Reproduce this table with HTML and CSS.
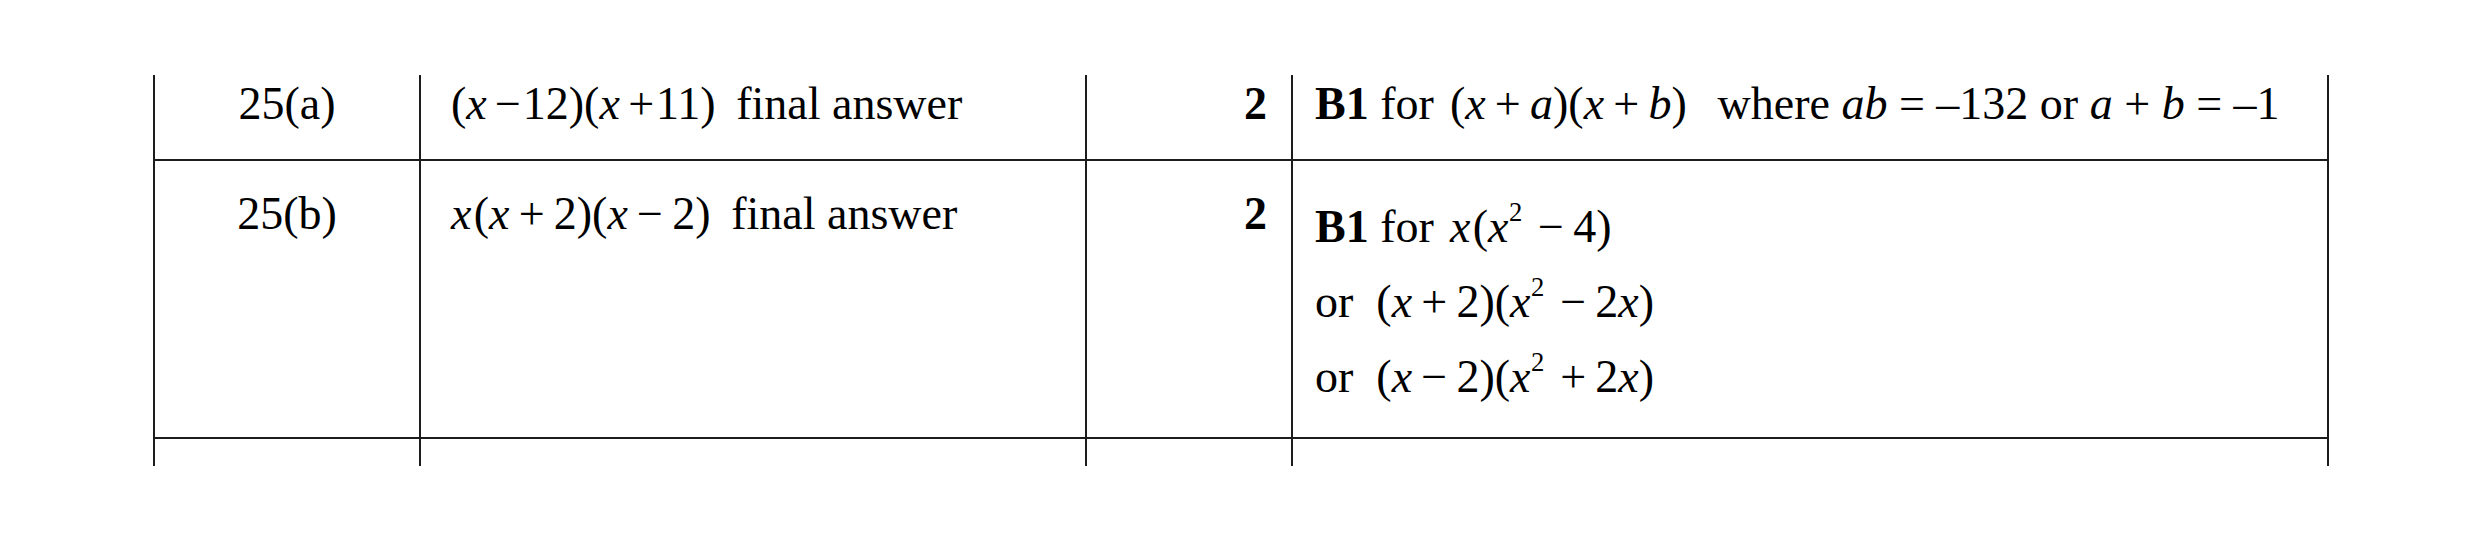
FILE: index.html
```html
<!DOCTYPE html>
<html lang="en">
<head>
<meta charset="utf-8">
<title>Mark scheme</title>
<link rel="stylesheet" href="styles.css">
</head>
<body>
<div class="page">
  <table class="scheme">
    <colgroup>
      <col class="c-q">
      <col class="c-ans">
      <col class="c-mark">
      <col class="c-notes">
    </colgroup>
    <tbody>
      <tr class="row-a">
        <td class="q">25(a)</td>
        <td class="ans"><span class="m">(<i>x</i><span class="op tight">−</span>12)(<i>x</i><span class="op tight">+</span>11)</span><span class="gap"></span>final answer</td>
        <td class="mark">2</td>
        <td class="notes"><b>B1</b> for <span class="gap-s"></span><span class="m">(<i>x</i><span class="op">+</span><i>a</i>)(<i>x</i><span class="op">+</span><i>b</i>)</span><span class="gap wide"></span>where <i>ab</i> = –132 or <i>a</i> + <i>b</i> = –1</td>
      </tr>
      <tr class="row-b">
        <td class="q">25(b)</td>
        <td class="ans"><span class="m"><i class="xc">x</i>(<i>x</i><span class="op">+</span>2)(<i>x</i><span class="op">−</span>2)</span><span class="gap"></span>final answer</td>
        <td class="mark">2</td>
        <td class="notes">
          <div class="line"><b>B1</b> for <span class="gap-s"></span><span class="m"><i class="xc">x</i>(<i>x</i><sup>2</sup><span class="op">−</span>4)</span></div>
          <div class="line">or <span class="gap-or"></span><span class="m">(<i>x</i><span class="op">+</span>2)(<i>x</i><sup>2</sup><span class="op">−</span>2<i>x</i>)</span></div>
          <div class="line">or <span class="gap-or"></span><span class="m">(<i>x</i><span class="op">−</span>2)(<i>x</i><sup>2</sup><span class="op">+</span>2<i>x</i>)</span></div>
        </td>
      </tr>
      <tr class="row-c">
        <td></td>
        <td></td>
        <td></td>
        <td></td>
      </tr>
    </tbody>
  </table>
</div>
</body>
</html>
```

FILE: styles.css
```css
html, body {
  margin: 0;
  padding: 0;
  background: #ffffff;
}

body {
  font-family: "Liberation Serif", "Times New Roman", serif;
  color: #000000;
  font-size: 46px;
}

.page {
  padding: 75px 0 0 153px;
}

.scheme {
  border-collapse: collapse;
  table-layout: fixed;
  width: 2174px;
}

.c-q { width: 266px; }
.c-ans { width: 666px; }
.c-mark { width: 206px; }
.c-notes { width: 1036px; }

.scheme td {
  border-left: 2px solid #1c1c1c;
  border-right: 2px solid #1c1c1c;
  vertical-align: top;
  padding: 0;
  line-height: 46px;
  white-space: nowrap;
}

.row-a td {
  height: 85px;
  border-bottom: 2px solid #1c1c1c;
  padding-top: 6px;
  box-sizing: border-box;
}

.row-b td {
  height: 278px;
  border-bottom: 2px solid #1c1c1c;
  padding-top: 30px;
  box-sizing: border-box;
}

.row-c td {
  height: 28px;
  box-sizing: border-box;
}

.q {
  text-align: center;
}

.ans {
  padding-left: 30px !important;
}

.mark {
  text-align: right;
  font-weight: bold;
  padding-right: 24px !important;
}

.notes {
  padding-left: 22px !important;
}

.row-b .notes {
  padding-top: 43px !important;
}

.line {
  height: 75px;
}

.m i {
  font-style: italic;
}

.m .xc {
  margin-right: 0.05em;
}

.op {
  display: inline-block;
  margin: 0 0.2em;
}

.op.tight {
  margin: 0 0.04em 0 0.18em;
}

.gap {
  display: inline-block;
  width: 0.45em;
}

.gap.wide {
  width: 0.67em;
}

.gap-s {
  display: inline-block;
  width: 0.1em;
}

.gap-or {
  display: inline-block;
  width: 0.25em;
}

sup {
  font-size: 0.58em;
  line-height: 0;
  vertical-align: 0.8em;
  margin-left: 0.02em;
  margin-right: 0.25em;
}
```
